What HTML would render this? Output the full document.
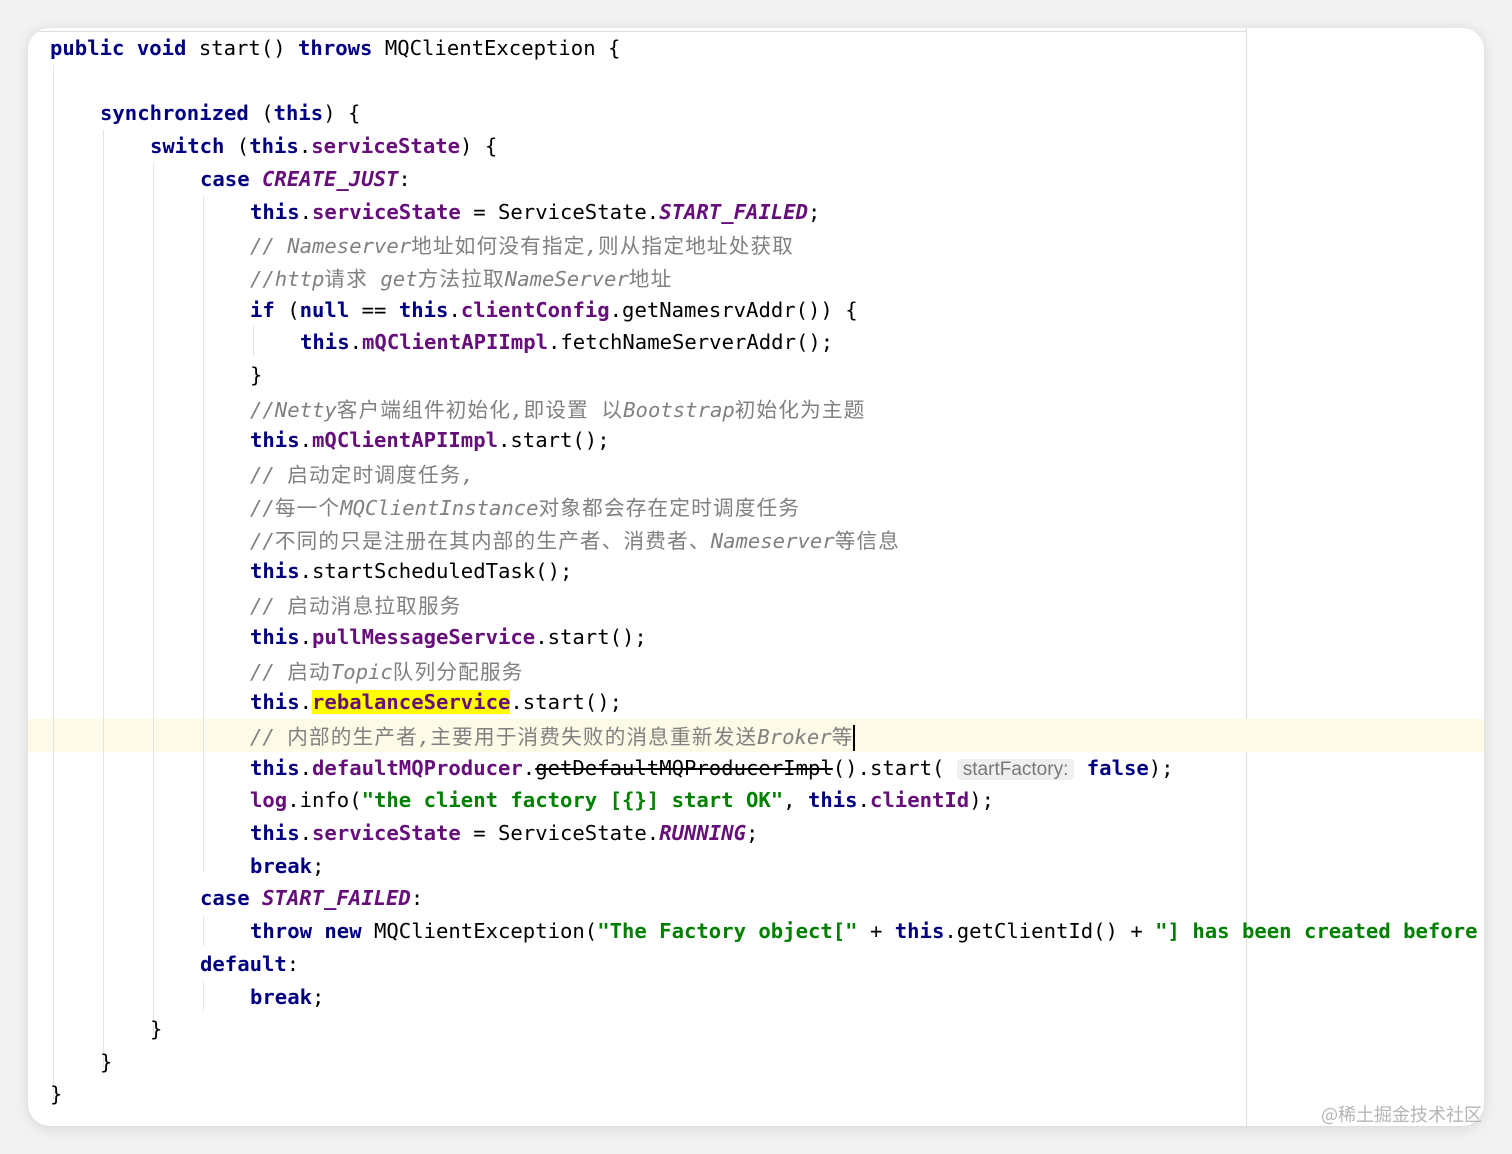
<!DOCTYPE html>
<html><head><meta charset="utf-8">
<style>
html,body{margin:0;padding:0;background:#f2f2f2;}
body{width:1512px;height:1154px;position:relative;overflow:hidden;}
#card{position:absolute;left:28px;top:28px;width:1456px;height:1098px;background:#fff;border-radius:22px;box-shadow:0 2px 14px rgba(0,0,0,0.12);overflow:hidden;}
.ln{position:absolute;left:0;height:32px;line-height:32px;white-space:pre;font-family:"DejaVu Sans Mono","Liberation Mono",monospace;font-size:20.6px;color:#000;}
.k{color:#000080;font-weight:bold;}
.f{color:#660e7a;font-weight:bold;}
.s{color:#660e7a;font-weight:bold;font-style:italic;}
.c{color:#808080;font-style:italic;}
.str{color:#008000;font-weight:bold;}
.z{font-family:"Noto Sans CJK SC",sans-serif;font-style:normal;font-size:20.6px;letter-spacing:1.2px;}
.g{position:absolute;width:1px;background:#e4e4e4;}
.hint{background:#efefef;color:#787878;font-family:"Liberation Sans",sans-serif;font-size:19px;border-radius:4px;padding:0 6px;}
</style></head><body>
<div id="card">
<div style="position:absolute;left:0;top:3px;width:1218px;height:1px;background:#ddd"></div>
<div style="position:absolute;left:1218px;top:0;width:1px;height:1098px;background:#ddd"></div>
<div style="position:absolute;left:0;top:691px;width:1456px;height:33px;background:#fdfbe7"></div>
<div class="g" style="left:25px;top:37px;height:1035px"></div>
<div class="g" style="left:75px;top:102px;height:937px"></div>
<div class="g" style="left:125px;top:135px;height:871px"></div>
<div class="g" style="left:175px;top:168px;height:676px"></div>
<div class="g" style="left:175px;top:888px;height:30px"></div>
<div class="g" style="left:175px;top:953px;height:30px"></div>
<div class="g" style="left:225px;top:298px;height:30px"></div>
<div id="code" style="position:absolute;left:-28px;top:-28px;">
<div class="ln" style="top:32px;left:50px"><span class="k">public</span> <span class="k">void</span> start() <span class="k">throws</span> MQClientException {</div>
<div class="ln" style="top:97px;left:100px"><span class="k">synchronized</span> (<span class="k">this</span>) {</div>
<div class="ln" style="top:130px;left:150px"><span class="k">switch</span> (<span class="k">this</span>.<span class="f">serviceState</span>) {</div>
<div class="ln" style="top:163px;left:200px"><span class="k">case</span> <span class="s">CREATE_JUST</span>:</div>
<div class="ln" style="top:196px;left:250px"><span class="k">this</span>.<span class="f">serviceState</span> = ServiceState.<span class="s">START_FAILED</span>;</div>
<div class="ln" style="top:228px;left:250px"><span class="c">// Nameserver<span class="z">地址如何没有指定</span>,<span class="z">则从指定地址处获取</span></span></div>
<div class="ln" style="top:261px;left:250px"><span class="c">//http<span class="z">请求</span> get<span class="z">方法拉取</span>NameServer<span class="z">地址</span></span></div>
<div class="ln" style="top:294px;left:250px"><span class="k">if</span> (<span class="k">null</span> == <span class="k">this</span>.<span class="f">clientConfig</span>.getNamesrvAddr()) {</div>
<div class="ln" style="top:326px;left:300px"><span class="k">this</span>.<span class="f">mQClientAPIImpl</span>.fetchNameServerAddr();</div>
<div class="ln" style="top:359px;left:250px">}</div>
<div class="ln" style="top:392px;left:250px"><span class="c">//Netty<span class="z">客户端组件初始化</span>,<span class="z">即设置</span> <span class="z">以</span>Bootstrap<span class="z">初始化为主题</span></span></div>
<div class="ln" style="top:424px;left:250px"><span class="k">this</span>.<span class="f">mQClientAPIImpl</span>.start();</div>
<div class="ln" style="top:457px;left:250px"><span class="c">// <span class="z">启动定时调度任务</span>,</span></div>
<div class="ln" style="top:490px;left:250px"><span class="c">//<span class="z">每一个</span>MQClientInstance<span class="z">对象都会存在定时调度任务</span></span></div>
<div class="ln" style="top:523px;left:250px"><span class="c">//<span class="z">不同的只是注册在其内部的生产者、消费者、</span>Nameserver<span class="z">等信息</span></span></div>
<div class="ln" style="top:555px;left:250px"><span class="k">this</span>.startScheduledTask();</div>
<div class="ln" style="top:588px;left:250px"><span class="c">// <span class="z">启动消息拉取服务</span></span></div>
<div class="ln" style="top:621px;left:250px"><span class="k">this</span>.<span class="f">pullMessageService</span>.start();</div>
<div class="ln" style="top:654px;left:250px"><span class="c">// <span class="z">启动</span>Topic<span class="z">队列分配服务</span></span></div>
<div class="ln" style="top:686px;left:250px"><span class="k">this</span>.<span class="f" style="background:#ffff00">rebalanceService</span>.start();</div>
<div class="ln" style="top:719px;left:250px"><span class="c">// <span class="z">内部的生产者</span>,<span class="z">主要用于消费失败的消息重新发送</span>Broker<span class="z">等</span></span><span style="display:inline-block;width:2px;height:26px;background:#000;vertical-align:middle"></span></div>
<div class="ln" style="top:752px;left:250px"><span class="k">this</span>.<span class="f">defaultMQProducer</span>.<span style="text-decoration:line-through">getDefaultMQProducerImpl</span>().start( <span class="hint">startFactory:</span> <span class="k">false</span>);</div>
<div class="ln" style="top:784px;left:250px"><span class="f">log</span>.info(<span class="str">"the client factory [{}] start OK"</span>, <span class="k">this</span>.<span class="f">clientId</span>);</div>
<div class="ln" style="top:817px;left:250px"><span class="k">this</span>.<span class="f">serviceState</span> = ServiceState.<span class="s">RUNNING</span>;</div>
<div class="ln" style="top:850px;left:250px"><span class="k">break</span>;</div>
<div class="ln" style="top:882px;left:200px"><span class="k">case</span> <span class="s">START_FAILED</span>:</div>
<div class="ln" style="top:915px;left:250px"><span class="k">throw</span> <span class="k">new</span> MQClientException(<span class="str">"The Factory object["</span> + <span class="k">this</span>.getClientId() + <span class="str">"] has been created before</span></div>
<div class="ln" style="top:948px;left:200px"><span class="k">default</span>:</div>
<div class="ln" style="top:981px;left:250px"><span class="k">break</span>;</div>
<div class="ln" style="top:1013px;left:150px">}</div>
<div class="ln" style="top:1046px;left:100px">}</div>
<div class="ln" style="top:1078px;left:50px">}</div>
</div>
</div>
<div style="position:absolute;right:30px;top:1101px;font-family:'Noto Sans CJK SC',sans-serif;font-size:18px;color:#b5b5b5;">@稀土掘金技术社区</div>
</body></html>
